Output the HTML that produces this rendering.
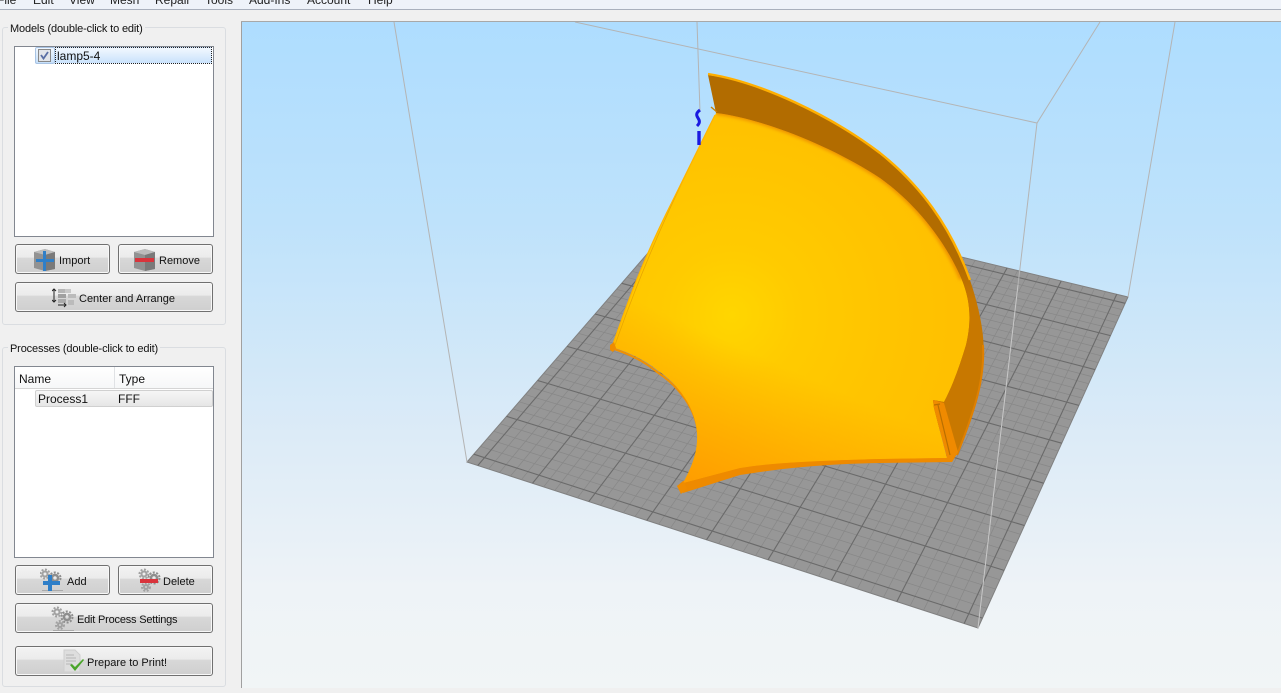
<!DOCTYPE html>
<html><head><meta charset="utf-8">
<style>
html,body{margin:0;padding:0;width:1281px;height:693px;overflow:hidden;background:#f0f0f0;font-family:"Liberation Sans",sans-serif;font-size:11px;color:#111}
.a{position:absolute}
#menu{left:0;top:0;width:1281px;height:9px;background:#eef2f9;border-bottom:1px solid #a9b0bd;overflow:hidden}
#menu span{position:absolute;top:-7px;font-size:12px;color:#222;white-space:nowrap}
.grp{border:1px solid #dadde1;border-radius:3px;box-sizing:border-box;background:#f0f0f0}
.lbl{background:#f0f0f0;padding:0 2px;font-size:11px;white-space:nowrap;color:#111;letter-spacing:-.15px}
.list{background:#fff;border:1px solid #828790;box-sizing:border-box}
.btn{border:1px solid #707070;border-radius:3px;box-sizing:border-box;background:linear-gradient(#f3f3f3 0,#ebebeb 44%,#d8d8d8 46%,#cfcfcf 100%);box-shadow:inset 0 0 0 1px #f8f8f8}
.btn span{position:absolute;white-space:nowrap;font-size:11px;color:#111}
.btn svg{position:absolute}
</style></head><body>
<div class="a" id="menu">
<span style="left:-3px">File</span><span style="left:33px">Edit</span><span style="left:69px">View</span><span style="left:110px">Mesh</span><span style="left:155px">Repair</span><span style="left:205px">Tools</span><span style="left:249px">Add-Ins</span><span style="left:307px">Account</span><span style="left:368px">Help</span>
</div>

<div class="a grp" style="left:2px;top:27px;width:224px;height:298px"></div>
<div class="a lbl" style="left:8px;top:23px">Models (double-click to edit)</div>
<div class="a list" style="left:14px;top:46px;width:200px;height:191px"></div>
<div class="a" style="left:35px;top:47px;width:20px;height:17px;box-sizing:border-box;border:1px solid #a9c4e4;border-radius:2px;background:linear-gradient(#f0f7fe,#c6e0fb)"></div>
<div class="a" style="left:55px;top:47px;width:157px;height:17px;box-sizing:border-box;border:1px dotted #222;background:linear-gradient(#f2f8fe,#c9e2fc)"></div>
<div class="a" style="left:38px;top:49px;width:13px;height:13px;box-sizing:border-box;border:1px solid #888;background:#e2e5ea"></div>
<svg class="a" style="left:38px;top:49px" width="13" height="13"><path d="M3 6l2.5 3.5L10 3" fill="none" stroke="#5a6fa5" stroke-width="1.8"/></svg>
<div class="a" style="left:57px;top:49px;font-size:12px">lamp5-4</div>

<div class="a btn" style="left:15px;top:244px;width:95px;height:30px">
<svg style="left:17px;top:3px" width="24" height="24"><path d="M1 4l11-3 10 3v17l-10 2-11-3z" fill="#929292"/><path d="M1 4l11 3 10-3-10-3z" fill="#bcbcbc"/><path d="M12 7l10-3v17l-10 2z" fill="#7a7a7a"/><path d="M10 3h3v8h8v3h-8v9h-3v-9H3v-3h7z" fill="#2f7fc8"/></svg>
<span style="left:43px;top:10px">Import</span></div>
<div class="a btn" style="left:118px;top:244px;width:95px;height:30px">
<svg style="left:14px;top:3px" width="24" height="24"><path d="M1 4l11-3 10 3v17l-10 2-11-3z" fill="#929292"/><path d="M1 4l11 3 10-3-10-3z" fill="#bcbcbc"/><path d="M12 7l10-3v17l-10 2z" fill="#7a7a7a"/><rect x="2" y="10" width="19" height="4" fill="#d9343c"/></svg>
<span style="left:40px;top:10px">Remove</span></div>
<div class="a btn" style="left:15px;top:282px;width:198px;height:30px">
<svg style="left:36px;top:5px" width="25" height="21"><path d="M2 1v13M0 3l2-2 2 2M0 12l2 2 2-2" stroke="#222" fill="none"/><rect x="6" y="1" width="7" height="4" fill="#b5b5b5"/><rect x="13" y="1" width="6" height="4" fill="#c8c8c8"/><rect x="6" y="6" width="8" height="4" fill="#a0a0a0"/><rect x="16" y="6" width="8" height="4" fill="#bbb"/><rect x="6" y="11" width="8" height="4" fill="#aaa"/><rect x="16" y="12" width="6" height="5" fill="#bbb"/><path d="M6 17h8M12 15l2 2-2 2" stroke="#222" fill="none"/></svg>
<span style="left:63px;top:10px">Center and Arrange</span></div>

<div class="a grp" style="left:2px;top:347px;width:224px;height:340px"></div>
<div class="a lbl" style="left:8px;top:343px">Processes (double-click to edit)</div>
<div class="a list" style="left:14px;top:366px;width:200px;height:192px"></div>
<div class="a" style="left:15px;top:367px;width:198px;height:21px;background:linear-gradient(#fff,#f6f7f8);border-bottom:1px solid #d5d5d5"></div>
<div class="a" style="left:114px;top:367px;width:1px;height:21px;background:#e0e2e5"></div>
<div class="a" style="left:19px;top:372px;font-size:12px">Name</div>
<div class="a" style="left:119px;top:372px;font-size:12px">Type</div>
<div class="a" style="left:35px;top:390px;width:178px;height:17px;box-sizing:border-box;border:1px solid #d0d0d0;border-radius:2px;background:linear-gradient(#f6f6f6,#e6e6e6)"></div>
<div class="a" style="left:38px;top:392px;font-size:12px">Process1</div>
<div class="a" style="left:118px;top:392px;font-size:12px">FFF</div>

<div class="a btn" style="left:15px;top:565px;width:95px;height:30px">
<svg style="left:24px;top:2px" width="26" height="26"><g fill="none" stroke="#a2a2a2"><circle cx="5" cy="6" r="2.5" stroke-width="2"/><circle cx="5" cy="6" r="4.5" stroke-width="2" stroke-dasharray="2 1.5"/><circle cx="15" cy="10" r="3" stroke-width="2.5" stroke="#8e8e8e"/><circle cx="15" cy="10" r="5.5" stroke-width="2" stroke-dasharray="2 1.5" stroke="#8e8e8e"/></g><rect x="2" y="22" width="21" height="1" fill="#aaa"/><path d="M8 7h4v6h8v4h-8v6H8v-6H3v-4h5z" fill="#2f7fc8"/></svg>
<span style="left:51px;top:10px">Add</span></div>
<div class="a btn" style="left:118px;top:565px;width:95px;height:30px">
<svg style="left:19px;top:2px" width="26" height="26"><g fill="none" stroke="#a2a2a2"><circle cx="6" cy="6" r="2.5" stroke-width="2"/><circle cx="6" cy="6" r="4.5" stroke-width="2" stroke-dasharray="2 1.5"/><circle cx="16" cy="10" r="3" stroke-width="2.5" stroke="#8e8e8e"/><circle cx="16" cy="10" r="5.5" stroke-width="2" stroke-dasharray="2 1.5" stroke="#8e8e8e"/><circle cx="8" cy="19" r="2" stroke-width="2"/><circle cx="8" cy="19" r="4" stroke-width="2" stroke-dasharray="2 1.5"/></g><rect x="2" y="11" width="18" height="4" fill="#d9343c"/></svg>
<span style="left:44px;top:10px">Delete</span></div>
<div class="a btn" style="left:15px;top:603px;width:198px;height:30px">
<svg style="left:35px;top:2px" width="26" height="26"><g fill="none" stroke="#a2a2a2"><circle cx="6" cy="6" r="2.5" stroke-width="2"/><circle cx="6" cy="6" r="4.5" stroke-width="2" stroke-dasharray="2 1.5"/><circle cx="16" cy="11" r="3" stroke-width="2.5" stroke="#8e8e8e"/><circle cx="16" cy="11" r="5.5" stroke-width="2" stroke-dasharray="2 1.5" stroke="#8e8e8e"/><circle cx="9" cy="19" r="2" stroke-width="2"/><circle cx="9" cy="19" r="4" stroke-width="2" stroke-dasharray="2 1.5"/></g><rect x="2" y="24" width="21" height="1" fill="#aaa"/></svg>
<span style="left:61px;top:10px;letter-spacing:-.2px">Edit Process Settings</span></div>
<div class="a btn" style="left:15px;top:646px;width:198px;height:30px">
<svg style="left:46px;top:2px" width="24" height="26"><path d="M2 1h11l5 5v17H2z" fill="#dedede" stroke="#cfcfcf"/><path d="M4 6h8M4 9h10M4 12h10M4 15h6" stroke="#b5b5b5"/><path d="M8 16l5 6 9-11-1-1-8 8-3-3z" fill="#4aa52a"/></svg>
<span style="left:71px;top:10px">Prepare to Print!</span></div>

<svg class="a" style="left:241px;top:21px" width="1040" height="667" viewBox="241 21 1040 667" id="v">
<defs>
<linearGradient id="bg" x1="0" y1="0" x2="0" y2="1"><stop offset="0" stop-color="#aeddff"/><stop offset=".3" stop-color="#bee2fb"/><stop offset=".62" stop-color="#dcebf7"/><stop offset=".85" stop-color="#eef3f7"/><stop offset="1" stop-color="#f1f5f6"/></linearGradient>
<radialGradient id="face" gradientUnits="userSpaceOnUse" cx="732" cy="315" r="260"><stop offset="0" stop-color="#ffd600"/><stop offset=".25" stop-color="#ffcb00"/><stop offset=".6" stop-color="#ffc400"/><stop offset="1" stop-color="#ffbe00"/></radialGradient>
<linearGradient id="over" gradientUnits="userSpaceOnUse" x1="770" y1="360" x2="712" y2="490"><stop offset="0" stop-color="#ff9c00" stop-opacity="0"/><stop offset="1" stop-color="#ff9c00" stop-opacity=".95"/></linearGradient>
<linearGradient id="wall" gradientUnits="userSpaceOnUse" x1="0" y1="265" x2="0" y2="300"><stop offset="0" stop-color="#b26c00"/><stop offset="1" stop-color="#c87800"/></linearGradient>
<filter id="b" x="-10%" y="-10%" width="120%" height="120%"><feGaussianBlur stdDeviation="1.8"/></filter>
<clipPath id="fc"><path d="M716 113C760 118 830 145 880 178C915 203 945 240 962 280C970 300 972 320 966 345C960 365 953 385 944 402L933 400L934 408L947 458L880 459C810 461 770 463 740 468L683 483C693 465 698 450 697 433C696 410 680 385 657 370C645 360 630 353 612 347C625 310 640 265 673 200L715 115Z"/></clipPath>
</defs>
<rect x="241" y="21" width="1040" height="667" fill="url(#bg)"/>
<g id="grid"></g>
<g stroke="#b4b4b4" stroke-width="1" fill="none">
<path d="M394 22L467 462M575 22L1037 123L1100 22M1175 22L1128 297M697 22L700 112"/>
<path d="M1037 123L1018 285"/>
<path d="M1018 285L978 628" stroke="#c8c8c8"/>
</g>
<!-- walls (closing edge runs well inside the face so no sky shows through) -->
<path d="M708 75C760 82 830 115 880 153C920 185 950 225 970 280C980 310 986 340 983 363C982 380 975 410 958 453L950 462L930 400L900 300L760 180L716 113Z" fill="url(#wall)"/>
<path d="M708 74C760 82 830 115 880 153C920 185 950 225 970 280" fill="none" stroke="#ffaf00" stroke-width="2.4"/>
<path d="M983 345C985 380 974 412 957 455" fill="none" stroke="#e08000" stroke-width="2"/>
<!-- bottom lip -->
<path d="M677 486L683 481L740 466C790 460 880 457 947 457L958 452L952 462L880 463C830 464 790 467 740 475L683 493Z" fill="#ee8a00"/>
<path d="M611 348C630 354 645 362 657 372C680 387 696 410 698 433" fill="none" stroke="#f09000" stroke-width="2"/>
<!-- main face -->
<g clip-path="url(#fc)">
<path d="M716 113C760 118 830 145 880 178C915 203 945 240 962 280C970 300 972 320 966 345C960 365 953 385 944 402L933 400L934 408L947 458L880 459C810 461 770 463 740 468L683 483C693 465 698 450 697 433C696 410 680 385 657 370C645 360 630 353 612 347C625 310 640 265 673 200L715 115Z" fill="url(#face)"/>
<rect x="600" y="100" width="380" height="400" fill="url(#over)"/>
<path d="M716 112C760 117 830 144 880 177C915 202 945 239 962 279" fill="none" stroke="#ec8c00" stroke-width="5" filter="url(#b)"/>
</g>
<path d="M713 119C690 165 650 245 615 345" fill="none" stroke="#e8a600" stroke-width=".8"/>
<path d="M715 115L673 200C640 265 625 310 612 347" fill="none" stroke="#ffb400" stroke-width="1.2"/>
<path d="M610 345l4-3 2 6-3 4-3-2z" fill="#ee8c00"/>
<path d="M677 486l7-4 3 6-6 6z" fill="#f08c00"/>
<path d="M933 400l11 3 14 49-6 10-5-4-13-50z" fill="#ef8a00"/>
<path d="M938 405l12 50" stroke="#b96f00" stroke-width="1.2" fill="none"/>
<path d="M934 405l6-1" stroke="#b96f00" stroke-width="1.2"/>
<path d="M711 107l6 5" stroke="#c98000" stroke-width="1.4" fill="none"/>
<!-- blue marker -->
<path d="M700 110c-4 3-4 5-2 8s2 5-1 8" fill="none" stroke="#1a1ae0" stroke-width="3"/>
<path d="M699 131v14" stroke="#1a1ae0" stroke-width="3.4"/>
</svg>
<div class="a" style="left:241px;top:21px;width:1px;height:667px;background:#a0a0a0"></div>
<div class="a" style="left:241px;top:21px;width:1040px;height:1px;background:#a8a8a8"></div>

<script>
(function(){
var p=[[467,462],[978,628],[1128,297],[699,194]];
function H(p){var x0=p[0][0],y0=p[0][1],x1=p[1][0],y1=p[1][1],x2=p[2][0],y2=p[2][1],x3=p[3][0],y3=p[3][1];
var dx1=x1-x2,dx2=x3-x2,sx=x0-x1+x2-x3,dy1=y1-y2,dy2=y3-y2,sy=y0-y1+y2-y3,d=dx1*dy2-dx2*dy1;
var g=(sx*dy2-dx2*sy)/d,h=(dx1*sy-sx*dy1)/d;
return [x1-x0+g*x1,x3-x0+h*x3,x0,y1-y0+g*y1,y3-y0+h*y3,y0,g,h];}
var m=H(p);
function P(u,v){var w=m[6]*u+m[7]*v+1;return ((m[0]*u+m[1]*v+m[2])/w).toFixed(1)+" "+((m[3]*u+m[4]*v+m[5])/w).toFixed(1);}
var ns="http://www.w3.org/2000/svg",g=document.getElementById("grid");
var q=document.createElementNS(ns,"path");q.setAttribute("d","M"+p.map(function(a){return a.join(" ")}).join("L")+"Z");q.setAttribute("fill","#979797");q.setAttribute("stroke","#808080");g.appendChild(q);
var N=42,a="",b="";
for(var i=1;i<N;i++){var t=i/N,maj=((i-1)%5==0);
var s="M"+P(t,0)+"L"+P(t,1)+"M"+P(0,t)+"L"+P(1,t);
if(maj)b+=s;else a+=s;}
function L(d,c,w){var e=document.createElementNS(ns,"path");e.setAttribute("d",d);e.setAttribute("stroke",c);e.setAttribute("stroke-width",w);e.setAttribute("fill","none");g.appendChild(e);}
L(a,"#878787",0.7);L(b,"#6a6a6a",1.1);
})();
</script>
</body></html>
